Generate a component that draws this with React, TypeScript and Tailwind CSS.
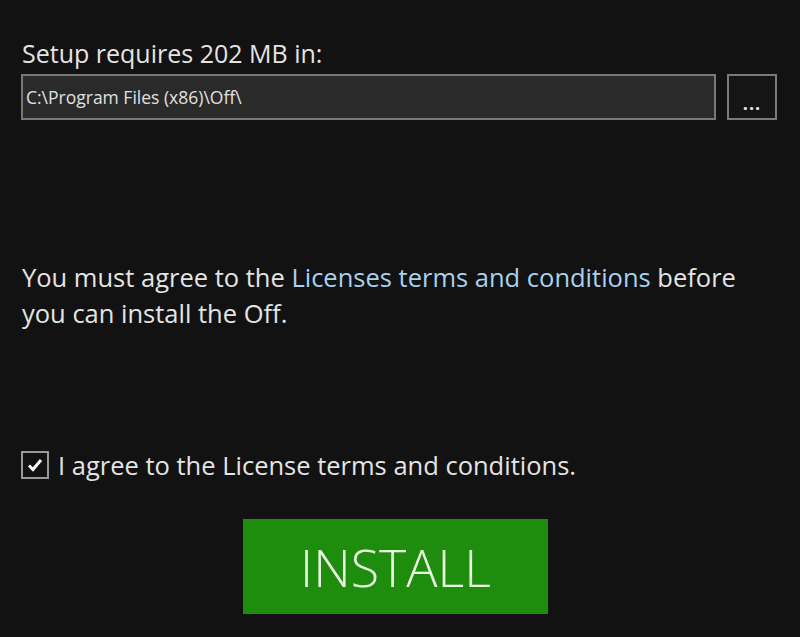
export default function App() {
  return (
    <div className="w-[800px] h-[637px] bg-[#121212] text-[#e4e4e4] overflow-hidden font-['Open_Sans',sans-serif]">
      <div className="pl-[21px] pr-[23px] pt-[37px]">
        <p className="text-[25px] leading-[32px] ml-[1px]">Setup requires 202 MB in:</p>
        <div className="mt-[5px] flex gap-[11px]">
          <div className="flex-1 h-[46px] bg-[#2a2a2a] border-2 border-[#787878] flex items-center px-[3px]">
            <span className="text-[17.5px] font-medium text-[#e0e0e0]">C:\Program Files (x86)\Off\</span>
          </div>
          <div className="w-[50px] h-[46px] bg-[#151515] border-2 border-[#7a7a7a] flex items-end justify-center pb-[6px]">
            <span className="text-[18px] leading-none font-bold tracking-[1px]">...</span>
          </div>
        </div>
        <p className="mt-[139px] text-[25.5px] leading-[36px] ml-[1px]">
          You must agree to the <span className="text-[#a9d1ee]">Licenses terms and conditions</span> before
          <br />
          you can install the Off.
        </p>
        <div className="mt-[119px] flex items-center gap-[9px]">
          <div className="w-[28px] h-[28px] border-2 border-[#9a9a9a] flex items-center justify-center">
            <svg width="16" height="14" viewBox="0 0 16 14">
              <path d="M2 7.5 L6 11.5 L14 2" stroke="#ffffff" strokeWidth="3" fill="none" />
            </svg>
          </div>
          <span className="text-[25.5px] leading-[30px]">I agree to the License terms and conditions.</span>
        </div>
        <div className="mt-[39px] ml-[222px] w-[305px] h-[95px] bg-[#1e8c0d] flex items-center justify-center">
          <span className="text-[52px] font-light text-[#e8f8e0] leading-none">INSTALL</span>
        </div>
      </div>
    </div>
  );
}
